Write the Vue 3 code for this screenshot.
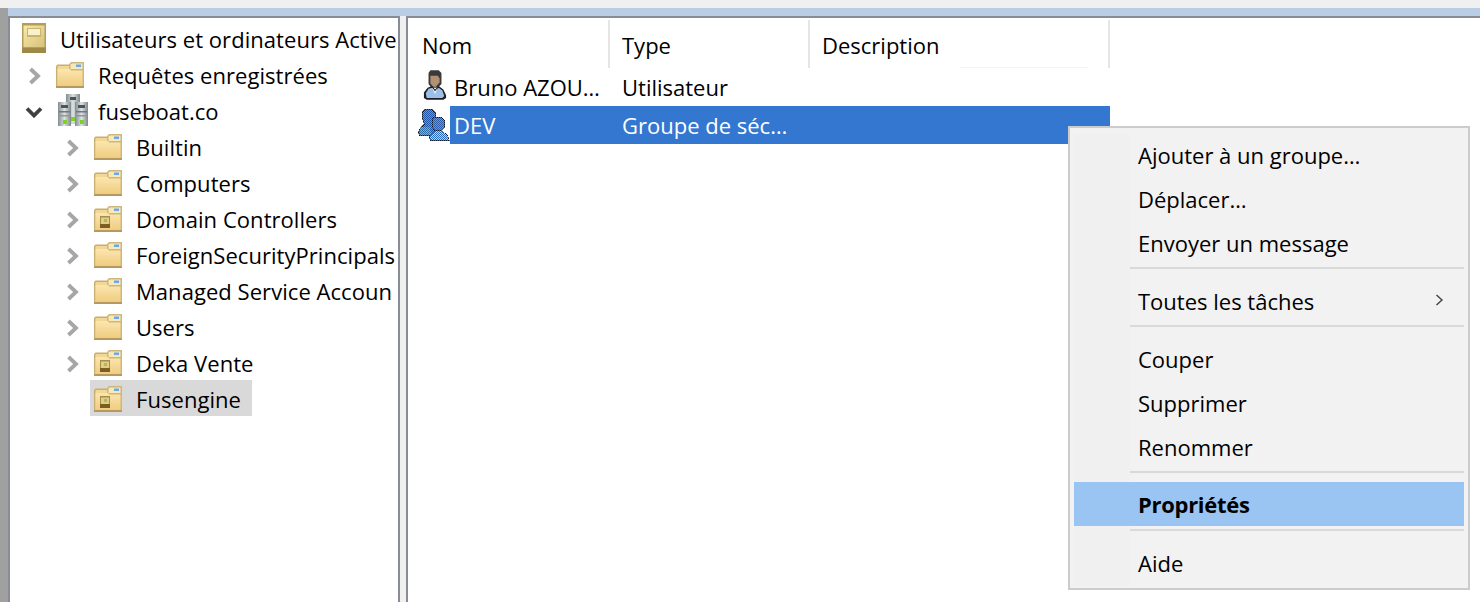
<script setup>
const tree = [
  { label: 'Requêtes enregistrées', level: 0, chevron: 'right', icon: 'folder' },
  { label: 'fuseboat.co', level: 0, chevron: 'down', icon: 'domain' },
  { label: 'Builtin', level: 1, chevron: 'right', icon: 'folder' },
  { label: 'Computers', level: 1, chevron: 'right', icon: 'folder' },
  { label: 'Domain Controllers', level: 1, chevron: 'right', icon: 'ou' },
  { label: 'ForeignSecurityPrincipals', level: 1, chevron: 'right', icon: 'folder' },
  { label: 'Managed Service Accoun', level: 1, chevron: 'right', icon: 'folder' },
  { label: 'Users', level: 1, chevron: 'right', icon: 'folder' },
  { label: 'Deka Vente', level: 1, chevron: 'right', icon: 'ou' },
  { label: 'Fusengine', level: 1, chevron: '', icon: 'ou', selected: true },
]
const columns = ['Nom', 'Type', 'Description']
const menu = [
  { label: 'Ajouter à un groupe…' },
  { label: 'Déplacer…' },
  { label: 'Envoyer un message', sep: 'a' },
  { label: 'Toutes les tâches', sub: true, sep: 'a' },
  { label: 'Couper' },
  { label: 'Supprimer' },
  { label: 'Renommer', sep: 'b' },
  { label: 'Propriétés', active: true, sep: 'c' },
  { label: 'Aide' },
]
</script>

<template>
  <div class="window">
    <div class="topbar"></div>
    <div class="titlebar"></div>
    <div class="main">
      <aside class="tree">
        <div class="row root">
          <span class="iconbox">
            <svg class="book" width="24" height="30" viewBox="0 0 24 30">
              <defs>
                <linearGradient id="bookG" x1="0" y1="0" x2="1" y2="1">
                  <stop offset="0" stop-color="#f6eaa8" />
                  <stop offset="1" stop-color="#d8c07a" />
                </linearGradient>
              </defs>
              <rect width="24" height="30" fill="#b39c5c" />
              <rect x="1.500" y="2.500" width="21" height="22" fill="url(#bookG)" />
              <rect x="5" y="5" width="14" height="9" fill="#c9b46c" />
              <rect x="6" y="6" width="12" height="6" fill="#f8f2cc" />
              <rect y="24.500" width="24" height="5.500" fill="#a08848" />
            </svg>
          </span>
          <span class="text">Utilisateurs et ordinateurs Active</span>
        </div>
        <div v-for="n in tree" :key="n.label" class="row" :style="{ paddingLeft: 8 + n.level * 38 + 'px' }">
          <span class="chev">
            <svg v-if="n.chevron === 'right'" class="right" width="13" height="18" viewBox="0 0 13 18">
              <path d="M2.500 2 L10 9 L2.500 16" fill="none" stroke="#a6a6a6" stroke-width="3.800" />
            </svg>
            <svg v-else-if="n.chevron === 'down'" class="down" width="18" height="12" viewBox="0 0 18 12">
              <path d="M2 2.500 L9 9.500 L16 2.500" fill="none" stroke="#404040" stroke-width="3.800" />
            </svg>
          </span>
          <span class="node" :class="{ selected: n.selected }">
            <span class="iconbox">
              <svg v-if="n.icon === 'domain'" class="domain" width="30" height="32" viewBox="0 0 30 32">
                <defs>
                  <linearGradient id="srv" x1="0" y1="0" x2="1" y2="0">
                    <stop offset="0" stop-color="#838c90" />
                    <stop offset=".5" stop-color="#dde2e3" />
                    <stop offset="1" stop-color="#7f888c" />
                  </linearGradient>
                </defs>
                <rect x="8" y="0" width="14" height="30" fill="url(#srv)" />
                <rect x="12" y="3" width="6" height="3" fill="#4a565c" />
                <rect x="0" y="8" width="13" height="24" fill="url(#srv)" />
                <rect x="17" y="8" width="13" height="24" fill="url(#srv)" />
                <rect x="3" y="11" width="7" height="3" fill="#4a565c" />
                <rect x="20" y="11" width="7" height="3" fill="#4a565c" />
                <rect x="1" y="17" width="11" height="1.500" fill="#6f787c" />
                <rect x="18" y="17" width="11" height="1.500" fill="#6f787c" />
                <rect x="1" y="21" width="11" height="1.500" fill="#8f989c" />
                <rect x="18" y="21" width="11" height="1.500" fill="#8f989c" />
                <rect x="5" y="26" width="4" height="4" fill="#7ed321" />
                <rect x="13" y="23" width="4" height="4" fill="#7ed321" />
                <rect x="22" y="26" width="4" height="4" fill="#7ed321" />
              </svg>
              <svg v-else class="folder" width="28" height="26" viewBox="0 0 28 26">
                <defs>
                  <linearGradient id="fold" x1="0" y1="0" x2="0" y2="1">
                    <stop offset="0" stop-color="#fbe6ae" />
                    <stop offset="1" stop-color="#f0cc80" />
                  </linearGradient>
                </defs>
                <path d="M0 4 L1.500 2.500 H13 V24 H0 Z" fill="#c9ae72" />
                <path d="M1.500 4 H13 V24 H1.500 Z" fill="#f3d894" />
                <path d="M13 2 L15 0 H28 V25 H13 Z" fill="#d0b67a" />
                <path d="M14.500 2.500 L16 1.500 H26.500 V7 H14.500 Z" fill="#f8e8b8" />
                <rect x="20" y="2.500" width="5" height="2.500" fill="#6ea6e6" />
                <path d="M1.500 7 H14 L15 8.500 H26.500 V24 H1.500 Z" fill="url(#fold)" />
                <rect x="0" y="24" width="28" height="2" fill="#b49a60" />
                <g v-if="n.icon === 'ou'">
                  <rect x="6" y="10" width="10" height="12" fill="#a88e4c" />
                  <rect x="7" y="11.500" width="8" height="6.500" fill="#dccf88" />
                  <rect x="10" y="13" width="3" height="3" fill="#bfb25a" />
                  <rect x="6" y="18" width="10" height="4" fill="#7c5e22" />
                </g>
              </svg>
            </span>
            <span class="text">{{ n.label }}</span>
          </span>
        </div>
      </aside>

      <div class="splitter"></div>

      <section class="list">
        <header class="head">
          <div v-for="c in columns" :key="c" class="col" :class="'col-' + c">{{ c }}</div>
        </header>
        <div class="item">
          <span class="item-icon user">
            <svg width="24" height="32" viewBox="0 0 26 32">
              <path d="M8 0 H17 L20 3 V15 L16 19 H9 L6 15 V3 Z" fill="#3a3a3a" />
              <path d="M8 6 H16 L18 9 V13 L14 18 H11 L8 14 Z" fill="#b09272" />
              <path d="M5 19 L10 17 L13 21 L17 17 L22 21 L25 27 V30 L22 32 H4 L1 30 V24 Z" fill="#1c1c22" />
              <path d="M6 20 L10 19 L13 23 L17 19 L21 22 L23 28 L21 30 H4 L3 25 Z" fill="#9dc0e8" />
              <path d="M10 19 L13 23 L16 19 L13 26 Z" fill="#f4f6fa" />
            </svg>
          </span>
          <div class="cells">
            <span class="cell name">Bruno AZOU…</span>
            <span class="cell type">Utilisateur</span>
          </div>
        </div>
        <div class="item sel">
          <span class="item-icon group">
            <svg width="32" height="33" viewBox="0 0 32 33" shape-rendering="crispEdges">
              <defs>
                <pattern id="outl" width="2" height="2" patternUnits="userSpaceOnUse">
                  <rect width="2" height="2" fill="#4b6ea3" />
                  <rect width="1" height="1" fill="#0a1428" />
                  <rect x="1" y="1" width="1" height="1" fill="#0a1428" />
                </pattern>
                <pattern id="backP" width="2" height="2" patternUnits="userSpaceOnUse">
                  <rect width="2" height="2" fill="#6f97cf" />
                  <rect width="1" height="1" fill="#1f55a8" />
                  <rect x="1" y="1" width="1" height="1" fill="#1f55a8" />
                </pattern>
                <pattern id="greenP" width="2" height="2" patternUnits="userSpaceOnUse">
                  <rect width="2" height="2" fill="#8db58e" />
                  <rect width="1" height="1" fill="#2e6ea4" />
                  <rect x="1" y="1" width="1" height="1" fill="#2e6ea4" />
                </pattern>
                <pattern id="headP" width="2" height="2" patternUnits="userSpaceOnUse">
                  <rect width="2" height="2" fill="#8d8f98" />
                  <rect width="1" height="1" fill="#2e5fa8" />
                  <rect x="1" y="1" width="1" height="1" fill="#2e5fa8" />
                </pattern>
                <pattern id="frontP" width="2" height="2" patternUnits="userSpaceOnUse">
                  <rect width="2" height="2" fill="#c2d9f5" />
                  <rect width="1" height="1" fill="#2468c8" />
                  <rect x="1" y="1" width="1" height="1" fill="#2468c8" />
                </pattern>
              </defs>
              <path d="M6 1 H15 L18 5 V12 L15 16 L20 20 L17 28 H1 L0 24 L3 18 L6 16 L4 11 V4 Z" fill="url(#outl)" />
              <path d="M7 2 H14 L17 6 V12 L14 16 L18 20 L15 27 H2 L1 24 L4 19 L7 16 L5 11 V5 Z" fill="url(#backP)" />
              <path d="M2 19 H12 L13 27 H2 Z" fill="url(#greenP)" />
              <path d="M15 9 H24 L27 13 V19 L24 23 L30 27 L32 33 H12 L11 28 L16 23 L14 19 V12 Z" fill="url(#outl)" />
              <path d="M16 10 H23 L26 13 V19 L23 22 H17 L15 19 V13 Z" fill="url(#headP)" />
              <path d="M17 23 L23 23 L29 27 L31 32 H13 L12 29 Z" fill="url(#frontP)" />
            </svg>
          </span>
          <div class="cells">
            <span class="cell name">DEV</span>
            <span class="cell type">Groupe de séc…</span>
          </div>
        </div>
      </section>
    </div>

    <nav class="menu">
      <div class="menu-inner">
        <template v-for="m in menu" :key="m.label">
          <div class="mi" :class="{ active: m.active }">
            <span>{{ m.label }}</span>
            <svg v-if="m.sub" class="sub" width="9" height="12" viewBox="0 0 9 12">
              <path d="M1.500 1 L7 6 L1.500 11" fill="none" stroke="#404040" stroke-width="1.400" />
            </svg>
          </div>
          <div v-if="m.sep" class="msep" :class="'sep-' + m.sep"></div>
        </template>
      </div>
    </nav>
  </div>
</template>

<style scoped>
.window {
  position: relative;
  width: 1480px;
  height: 602px;
  overflow: hidden;
  display: flex;
  flex-direction: column;
  background: #fff;
  font-family: "Open Sans", "Noto Sans", sans-serif;
  font-size: 22px;
  color: #000;
}
.topbar { height: 8px; background: #f0f0f0; flex: none; }
.titlebar { height: 8px; background: #b9cde5; flex: none; margin-left: 8px; }
.main {
  flex: 1;
  display: flex;
  min-height: 0;
  border-left: 8px solid #a0a0a0;
  margin-top: -8px;
  padding-top: 8px;
}
.tree {
  width: 388px;
  flex: none;
  border: 2px solid #888c96;
  border-bottom: 0;
  padding-top: 2px;
  overflow: hidden;
  background: #fff;
  box-sizing: content-box;
  letter-spacing: 0.05px;
}
.row {
  height: 36px;
  display: flex;
  align-items: center;
  white-space: nowrap;
}
.root { padding-left: 8px; }
.root .iconbox { padding-left: 4px; width: 42px; }
.row .text { position: relative; top: 1px; }
.chev {
  width: 38px;
  flex: none;
  display: flex;
  align-items: center;
  padding-left: 10px;
  box-sizing: border-box;
}
.chev .right { margin-top: 3px; }
.chev .down { margin-left: -3px; margin-top: 3px; }
.node {
  display: flex;
  align-items: center;
  height: 36px;
}
.node.selected {
  background: #d9d9d9;
  margin-left: -4px;
  padding-left: 4px;
  padding-right: 11px;
}
.iconbox {
  width: 42px;
  flex: none;
  display: flex;
  align-items: center;
  box-sizing: border-box;
}
.domain { margin-left: 2px; }
.folder { margin-top: 2px; }
.splitter { width: 6px; flex: none; background: #f0f0f0; }
.list {
  flex: 1;
  min-width: 0;
  border: 2px solid #888c96;
  border-width: 2px 0 0 2px;
  padding-top: 2px;
  background: #fff;
}
.head { display: flex; height: 48px; }
.col {
  width: 200px;
  box-sizing: border-box;
  padding: 11px 0 0 12px;
  border-right: 2px solid #e5e5e5;
  line-height: 28px;
}
.col-Nom { width: 202px; padding-left: 14px; }
.col-Description { width: 300px; position: relative; }
.col-Description::after {
  content: "";
  position: absolute;
  left: 150px;
  width: 128px;
  bottom: 0;
  height: 1px;
  background: #f5f5f5;
}
.item { display: flex; align-items: center; height: 38px; }
.item-icon {
  width: 42px;
  flex: none;
  display: flex;
  box-sizing: border-box;
}
.user { padding-left: 15px; margin-top: -4px; }
.group { padding-left: 10px; margin-top: -2px; }
.cells { display: flex; width: 660px; height: 100%; align-items: center; }
.sel .cells { background: #3477d1; color: #fff; }
.cell { white-space: nowrap; overflow: hidden; }
.name { width: 172px; padding-left: 4px; box-sizing: border-box; }
.menu {
  position: absolute;
  left: 1068px;
  top: 126px;
  width: 402px;
  height: 464px;
  box-sizing: border-box;
  border: 2px solid #cccccc;
  background: #f2f2f2;
  padding: 6px 4px 2px;
}
.menu-inner {
  background: linear-gradient(to right, #f0f0f0 56px, #f2f2f2 56px);
}
.mi {
  height: 44px;
  box-sizing: border-box;
  padding: 0 20px 2px 64px;
  display: flex;
  align-items: center;
  justify-content: space-between;
}
.mi.active { background: #9ac5f3; font-weight: 700; padding-bottom: 0; letter-spacing: -0.3px; }
.sub { margin-top: -2px; }
.msep { height: 2px; margin-left: 56px; background: #d9d9d9; }
.sep-a { margin-top: 1px; margin-bottom: 11px; }
.sep-b { margin-top: 1px; margin-bottom: 9px; }
.sep-c { margin-top: 3px; margin-bottom: 11px; }
</style>

<style>
html, body { margin: 0; padding: 0; }
</style>
